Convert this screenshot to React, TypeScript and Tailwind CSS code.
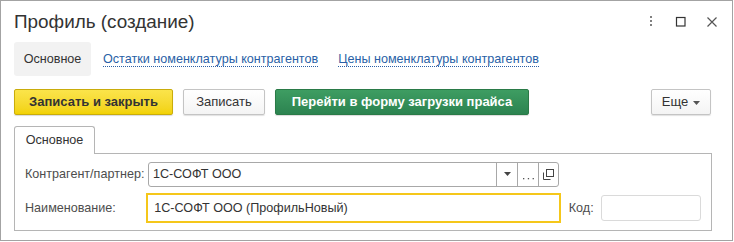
import React from 'react';

function TitleBar() {
  return (
    <div className="flex items-center h-[41px] pl-[13px] pr-[14px]">
      <div className="text-[18.9px] text-[#333] leading-none pt-[2px]">Профиль (создание)</div>
      <div className="ml-auto flex items-center">
        <svg width="8" height="14" viewBox="0 0 8 14" className="mr-[20px]">
          <rect x="3" y="1" width="2" height="2" fill="#808080" />
          <rect x="3" y="5" width="2" height="2" fill="#808080" />
          <rect x="3" y="9" width="2" height="2" fill="#808080" />
        </svg>
        <svg width="11" height="11" viewBox="0 0 11 11" className="mr-[20px]">
          <rect x="1.5" y="1.5" width="8.5" height="8.5" fill="none" stroke="#333" strokeWidth="1.2" />
        </svg>
        <svg width="12" height="12" viewBox="0 0 12 12">
          <path d="M1.5 1.5 L10.5 10.5 M10.5 1.5 L1.5 10.5" stroke="#555" strokeWidth="1.2" />
        </svg>
      </div>
    </div>
  );
}

function TopTabs() {
  return (
    <div className="flex items-center h-[34px] pl-[13px] text-[12.6px]">
      <div className="h-[34px] w-[77px] flex items-center justify-center bg-[#f2f2f2] rounded-[3px] text-[#333]">Основное</div>
      <a className="ml-[12px] text-[#2a5fa6] border-b border-dotted border-[#2a5fa6] leading-[14px]">Остатки номенклатуры контрагентов</a>
      <a className="ml-[20px] text-[#2a5fa6] border-b border-dotted border-[#2a5fa6] leading-[14px]">Цены номенклатуры контрагентов</a>
    </div>
  );
}

function CommandBar() {
  return (
    <div className="flex items-center mt-[13px] h-[26px] pl-[13px] pr-[21px] text-[13px]">
      <button className="h-[26px] w-[159px] rounded-[2px] border border-[#c9ac0b] bg-gradient-to-b from-[#fbe44a] to-[#f2d200] font-bold text-[#333] shadow-[0_1px_1px_rgba(0,0,0,0.15)]">
        Записать и закрыть
      </button>
      <button className="ml-[10px] h-[26px] w-[82px] rounded-[2px] border border-[#c4c4c4] bg-gradient-to-b from-white to-[#f4f4f4] text-[#333] shadow-[0_1px_1px_rgba(0,0,0,0.12)]">
        Записать
      </button>
      <button className="ml-[10px] h-[26px] w-[254px] rounded-[2px] border border-[#2a7a47] bg-gradient-to-b from-[#3e9d62] to-[#2c8350] font-bold text-white shadow-[0_1px_1px_rgba(0,0,0,0.15)]">
        Перейти в форму загрузки прайса
      </button>
      <button className="ml-auto h-[26px] w-[60px] rounded-[2px] border border-[#c4c4c4] bg-gradient-to-b from-white to-[#f4f4f4] text-[#333] flex items-center justify-center shadow-[0_1px_1px_rgba(0,0,0,0.12)]">
        Еще
        <svg width="7" height="4" viewBox="0 0 7 4" className="ml-[5px] mt-[2px]">
          <path d="M0 0 L7 0 L3.5 4 Z" fill="#555" />
        </svg>
      </button>
    </div>
  );
}

function Panel() {
  return (
    <div className="mt-[10px] pl-[13px] pr-[20px] text-[12.6px]">
      <div className="flex">
        <div className="h-[28px] w-[81px] border border-b-0 border-[#b5b5b5] rounded-t-[3px] bg-white flex items-center justify-center text-[#333] relative top-[1px]">
          Основное
        </div>
      </div>
      <div className="h-[78px] border border-[#b5b5b5] px-[10px] pt-[8px]">
        <div className="flex items-center h-[24px]">
          <div className="w-[123px] whitespace-nowrap text-[#4d4d4d]">Контрагент/партнер:</div>
          <div className="flex h-[25px] w-[411px] border border-[#a8a8a8] rounded-[3px] bg-white">
            <div className="flex-1 px-[4px] flex items-center text-[#333]">1С-СОФТ ООО</div>
            <div className="w-[21px] border-l border-[#a8a8a8] flex items-center justify-center">
              <svg width="7" height="4" viewBox="0 0 7 4"><path d="M0 0 L7 0 L3.5 4 Z" fill="#444" /></svg>
            </div>
            <div className="w-[21px] border-l border-[#a8a8a8] flex items-end justify-center pb-[6px]">
              <svg width="11" height="2" viewBox="0 0 11 2">
                <rect x="0" y="0" width="1.3" height="1.3" fill="#555" />
                <rect x="4.8" y="0" width="1.3" height="1.3" fill="#555" />
                <rect x="9.6" y="0" width="1.3" height="1.3" fill="#555" />
              </svg>
            </div>
            <div className="w-[20px] border-l border-[#a8a8a8] flex items-center justify-center">
              <svg width="11" height="11" viewBox="0 0 11 11">
                <rect x="3.5" y="0.5" width="7" height="7" fill="none" stroke="#444" strokeWidth="1" />
                <path d="M0.5 3.5 V10.5 H7.5" fill="none" stroke="#444" strokeWidth="1" />
              </svg>
            </div>
          </div>
        </div>
        <div className="flex items-center mt-[7px] h-[30px]">
          <div className="w-[122px] text-[#4d4d4d]">Наименование:</div>
          <div className="h-[30px] w-[417px] border-2 border-[#f5c71a] bg-white flex items-center px-[6px] text-[#333]">
            1С-СОФТ ООО (ПрофильНовый)
          </div>
          <div className="ml-[8px] w-[27px] text-[#4d4d4d]">Код:</div>
          <div className="ml-[5px] h-[26px] w-[101px] border border-[#dadada] rounded-[3px] bg-white" />
        </div>
      </div>
    </div>
  );
}

export default function App() {
  return (
    <div className="w-[734px] h-[242px] bg-white" style={{ fontFamily: '"Liberation Sans", Arial, sans-serif' }}>
      <div className="w-[733px] h-[241px] border border-[#a3a3a3] bg-white">
        <TitleBar />
        <TopTabs />
        <CommandBar />
        <Panel />
      </div>
    </div>
  );
}
